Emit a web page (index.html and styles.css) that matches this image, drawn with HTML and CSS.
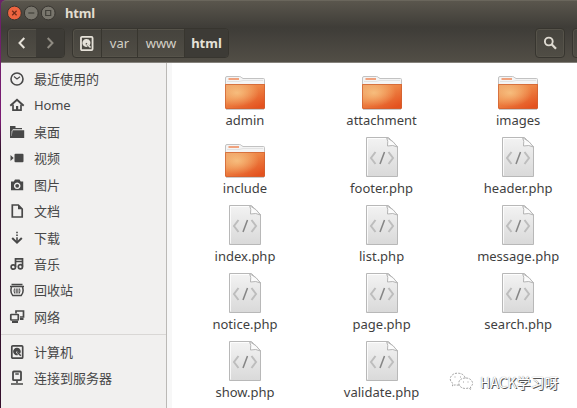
FILE: index.html
```html
<!DOCTYPE html>
<html lang="zh-CN">
<head>
<meta charset="utf-8">
<title>html</title>
<link rel="stylesheet" href="styles.css">
</head>
<body>
<svg class="defs" width="0" height="0">
  <defs>
    <linearGradient id="g-folder" x1="0" y1="0" x2="0.75" y2="1"><stop offset="0" stop-color="#eda066"/><stop offset=".45" stop-color="#ee8747"/><stop offset="1" stop-color="#e4521f"/></linearGradient>
    <radialGradient id="g-shine" cx=".3" cy=".35" r=".55"><stop offset="0" stop-color="#f9cd8d" stop-opacity=".75"/><stop offset="1" stop-color="#f9cd8d" stop-opacity="0"/></radialGradient>
    <linearGradient id="g-page" x1="0" y1="0" x2="0" y2="1"><stop offset="0" stop-color="#f3f3f3"/><stop offset="1" stop-color="#d9d9d9"/></linearGradient>
    <linearGradient id="g-fold" x1="0" y1="1" x2="1" y2="0"><stop offset="0" stop-color="#fff"/><stop offset=".5" stop-color="#fafafa"/><stop offset="1" stop-color="#bbb"/></linearGradient>
  </defs>
  <symbol id="folder" viewBox="0 0 42 36">
    <path d="M1.500 33V3q0-1.500 1.500-1.500H15.500q1 0 1.700.8L19 3.500H39.500q1 0 1 1V33z" fill="#f4f4f4" stroke="#c2c2c2"/>
    <path d="M4.500 4H15" stroke="#ef8f62" stroke-width="1.600"/>
    <path d="M3 6.500H15L19 5.500H39" stroke="#e2e2e2" fill="none"/>
    <path d="M1 9H41V32.500q0 1.500-1.500 1.500H2.500Q1 34 1 32.500z" fill="url(#g-folder)"/>
    <path d="M1 9H41V32.500q0 1.500-1.500 1.500H2.500Q1 34 1 32.500z" fill="url(#g-shine)"/>
    <path d="M1.500 9.500H40.500V32q0 1.500-1.500 1.500H3Q1.500 33.500 1.500 32z" fill="none" stroke="#cf6232" stroke-opacity=".75"/>
    <path d="M2 34.500H40" stroke="#aaa" stroke-opacity=".6"/>
  </symbol>
  <symbol id="php" viewBox="0 0 34 42">
    <path d="M1.500 1.500H23.500L32.500 10.500V40.500H1.500z" fill="url(#g-page)" stroke="#b8b8b8"/>
    <path d="M2.500 39.500V2.500H22" fill="none" stroke="#fff" stroke-opacity=".8"/>
    <path d="M21.500 1.500Q23.500 5 22.500 10Q28 8.500 32.500 11Q29 5 21.500 1.500z" fill="url(#g-fold)" stroke="#b5b5b5"/>
    <path d="M10.500 16L6 22L10.500 28M23.500 16L28 22L23.500 28" fill="none" stroke="#bdbdbd" stroke-width="2"/>
    <path d="M19.500 16L15 28" stroke="#858585" stroke-width="1.500"/>
  </symbol>
  <symbol id="disk" viewBox="0 0 16 16">
    <rect x="2.800" y="1.800" width="10.900" height="12.400" rx="1" fill="none" stroke="currentColor" stroke-width="1.700"/>
    <path d="M8.200 3.800a3.700 3.700 0 1 0 1 7.100L7 8.500l.8-1.300L11 9.800a3.700 3.700 0 0 0-2.800-6z" fill="currentColor"/>
    <path d="M8.300 8.300l3.500 3.500" stroke="currentColor" stroke-width="1.500"/>
  </symbol>
  <symbol id="clock" viewBox="0 0 16 16"><circle cx="8" cy="8" r="6" fill="none" stroke="currentColor" stroke-width="1.600"/><path d="M5 5.500L8 8l3-2.200" fill="none" stroke="currentColor" stroke-width="1.100"/></symbol>
  <symbol id="home" viewBox="0 0 16 16"><path d="M1.300 8.800L8 2.800l6.700 6" fill="none" stroke="currentColor" stroke-width="1.900"/><path d="M4 7.500V13.200H12V7.500" fill="none" stroke="currentColor" stroke-width="1.700"/><path d="M7 9h2.200v4H7z" fill="currentColor"/></symbol>
  <symbol id="desk" viewBox="0 0 16 16"><path d="M1 2h5.500v2H13v1.300H4L2.600 7V14H1z" fill="currentColor"/><path d="M3.500 6.300H15.200V14H1V12L2.800 12z" fill="currentColor"/></symbol>
  <symbol id="video" viewBox="0 0 16 16"><rect x="5.500" y="3.800" width="9" height="8.500" rx="1" fill="currentColor"/><path d="M1.500 5L4.700 8L1.500 11z" fill="currentColor"/></symbol>
  <symbol id="camera" viewBox="0 0 16 16"><path fill-rule="evenodd" d="M2 4.500h2.800L6 2.500h4.500l1.200 2H14.200V13.300H2zM8.200 5.500a3.300 3.300 0 1 0 .01 0z" fill="currentColor"/><circle cx="8.200" cy="8.800" r="1.900" fill="currentColor"/></symbol>
  <symbol id="doc" viewBox="0 0 16 16"><path d="M3.300 2H9.300L13.200 6V14H3.300z" fill="none" stroke="currentColor" stroke-width="1.700"/><path d="M9 2v4.200h4z" fill="currentColor"/></symbol>
  <symbol id="down" viewBox="0 0 16 16"><path d="M8 1.800v1.400M8 4.500v1.400M8 7.200V13" stroke="currentColor" stroke-width="1.600"/><path d="M3.200 8L8 12.700L12.800 8" fill="none" stroke="currentColor" stroke-width="2"/></symbol>
  <symbol id="music" viewBox="0 0 16 16"><path d="M6.500 11V2.800H13.500V10.500M6.500 5.500H13.500" fill="none" stroke="currentColor" stroke-width="1.700"/><circle cx="4.300" cy="11" r="2.200" fill="none" stroke="currentColor" stroke-width="1.700"/><circle cx="11.400" cy="10.700" r="2.100" fill="none" stroke="currentColor" stroke-width="1.700"/></symbol>
  <symbol id="trash" viewBox="0 0 16 16"><path d="M2.500 2.500H13.500M1 4.500H15" stroke="currentColor" stroke-width="1.500"/><path d="M2.500 5Q.8 10 3.800 13.500H12.200Q15.200 10 13.500 5" fill="none" stroke="currentColor" stroke-width="1.500"/><path d="M5.500 6.500q-1 2.500.2 5M10.500 6.500q1 2.500-.2 5M7.200 6.500v5M8.900 6.500v5" fill="none" stroke="currentColor"/></symbol>
  <symbol id="net" viewBox="0 0 16 16"><path d="M7 4.500V2H14.500V8H11" fill="none" stroke="currentColor" stroke-width="1.700"/><rect x="1.800" y="5.500" width="7.500" height="5.500" rx=".5" fill="#f1f0ef" stroke="currentColor" stroke-width="1.700"/><path d="M3 13H9M11 10h3.500" stroke="currentColor" stroke-width="2"/></symbol>
  <symbol id="server" viewBox="0 0 16 16"><rect x="4" y="1.500" width="8" height="8.700" rx=".8" fill="none" stroke="currentColor" stroke-width="1.800"/><path d="M6.300 4h3.500M8 10v3M2 14H14" stroke="currentColor" stroke-width="1.600"/></symbol>
</svg>
<div class="desktop">
  <div class="window">
    <header class="header">
      <div class="titlebar">
        <svg class="controls" width="50" height="16" viewBox="0 0 50 16">
          <circle cx="7.400" cy="8" r="6.900" fill="#ed6440" stroke="#383530"/><path d="M5.200 5.800l4.400 4.400m0-4.400l-4.400 4.400" stroke="#722c19" stroke-width="1.300"/>
          <circle cx="24.300" cy="8" r="6.900" fill="#79766d" stroke="#383530"/><path d="M21.300 8h6" stroke="#42403a" stroke-width="1.200"/>
          <circle cx="41.200" cy="8" r="6.900" fill="#79766d" stroke="#383530"/><path d="M38.700 5.500h5v5h-5z" fill="none" stroke="#42403a" stroke-width="1.200"/>
        </svg>
        <h1 class="title">html</h1>
      </div>
      <div class="toolbar">
        <div class="group nav">
          <span class="btn"><svg width="12" height="14" viewBox="0 0 12 14"><path d="M8.300 2L3.500 7l4.800 5" fill="none" stroke="#e6e2d9" stroke-width="2"/></svg></span>
          <span class="btn off"><svg width="12" height="14" viewBox="0 0 12 14"><path d="M3.700 2L8.500 7l-4.800 5" fill="none" stroke="#8f8b82" stroke-width="2"/></svg></span>
        </div>
        <div class="group path">
          <span class="btn root"><svg width="17" height="17"><use href="#disk"/></svg></span>
          <span class="btn var">var</span>
          <span class="btn www">www</span>
          <span class="btn current">html</span>
        </div>
        <div class="group search"><span class="btn"><svg width="16" height="16" viewBox="0 0 16 16"><circle cx="6.800" cy="6.500" r="3.900" fill="none" stroke="#dedad1" stroke-width="1.900"/><path d="M9.600 9.300L14 13.700" stroke="#dedad1" stroke-width="2.300"/></svg></span></div>
        <div class="group more"></div>
      </div>
    </header>
    <div class="body">
      <nav class="sidebar">
        <ul class="places">
          <li><svg><use href="#clock"/></svg>最近使用的</li>
          <li class="latin"><svg><use href="#home"/></svg>Home</li>
          <li><svg><use href="#desk"/></svg>桌面</li>
          <li><svg><use href="#video"/></svg>视频</li>
          <li><svg><use href="#camera"/></svg>图片</li>
          <li><svg><use href="#doc"/></svg>文档</li>
          <li><svg><use href="#down"/></svg>下载</li>
          <li><svg><use href="#music"/></svg>音乐</li>
          <li><svg><use href="#trash"/></svg>回收站</li>
          <li><svg><use href="#net"/></svg>网络</li>
        </ul>
        <ul class="places devices">
          <li><svg><use href="#disk"/></svg>计算机</li>
          <li><svg><use href="#server"/></svg>连接到服务器</li>
        </ul>
      </nav>
      <main class="files">
        <div class="file"><svg class="dir"><use href="#folder"/></svg><span>admin</span></div>
        <div class="file"><svg class="dir"><use href="#folder"/></svg><span>attachment</span></div>
        <div class="file"><svg class="dir"><use href="#folder"/></svg><span>images</span></div>
        <div class="file"><svg class="dir"><use href="#folder"/></svg><span>include</span></div>
        <div class="file"><svg class="page"><use href="#php"/></svg><span>footer.php</span></div>
        <div class="file"><svg class="page"><use href="#php"/></svg><span>header.php</span></div>
        <div class="file"><svg class="page"><use href="#php"/></svg><span>index.php</span></div>
        <div class="file"><svg class="page"><use href="#php"/></svg><span>list.php</span></div>
        <div class="file"><svg class="page"><use href="#php"/></svg><span>message.php</span></div>
        <div class="file"><svg class="page"><use href="#php"/></svg><span>notice.php</span></div>
        <div class="file"><svg class="page"><use href="#php"/></svg><span>page.php</span></div>
        <div class="file"><svg class="page"><use href="#php"/></svg><span>search.php</span></div>
        <div class="file"><svg class="page"><use href="#php"/></svg><span>show.php</span></div>
        <div class="file"><svg class="page"><use href="#php"/></svg><span>validate.php</span></div>
      </main>
    </div>
  </div>
  <div class="watermark">
    <svg width="26" height="20" viewBox="0 0 26 20" fill="none" stroke="#888" stroke-width=".8" stroke-dasharray="2 1.200">
      <path d="M10 13Q7.500 13.300 6 12.800L3.500 14L4 11.500Q.5 9 1.500 5.500Q3.500 1 9 1.200Q14.500 1.500 16 5.500"/>
      <path d="M16.500 6Q10 6.500 9.800 11Q10.500 16.500 17 16.500L19.500 16L22 17.500L21.500 15Q24 13 23.500 10.500Q22 6 16.500 6z"/>
      <path d="M6 4.500v1M11.500 4.500v1M14.500 9.500v1M19 9.500v1" stroke-dasharray="none"/>
    </svg>
    <span>HACK学习呀</span>
  </div>
</div>
</body>
</html>
```
FILE: styles.css
```css
* { box-sizing: border-box; }
body {
  margin: 0;
  font: 13px/16px "Noto Sans", "Noto Sans CJK SC", sans-serif;
  color: #3f3f3f;
}
.defs { position: absolute; }
.desktop {
  position: relative;
  width: 577px;
  height: 408px;
  padding-left: 1px;
  overflow: hidden;
  background: linear-gradient(#6b2468 0, #7a1a72 120px, #33142c 150px, #35102d 100%);
}
.window { height: 408px; display: flex; flex-direction: column; }
.header {
  height: 63px;
  flex: none;
  border-top: 1px solid #6a665c;
  border-bottom: 1px solid #85827c;
  border-top-left-radius: 5px;
  background: linear-gradient(#5a564d 0, #3f3d38 26px, #403e39 30px, #524e46 100%);
}
.titlebar { height: 24px; display: flex; align-items: center; padding-left: 6px; }
.title { margin: 0 0 0 8px; font-size: 13px; line-height: 16px; font-weight: 700; color: #e2ddd1; letter-spacing: -.15px; }
.toolbar { display: flex; padding: 3px 0 0 6px; height: 36px; }
.group {
  display: flex;
  flex: none;
  height: 30px;
  border: 1px solid #37352f;
  border-radius: 4px;
  box-shadow: inset 0 0 0 1px #56534a;
  background: linear-gradient(#45433d, #504d45);
}
.btn { display: flex; align-items: center; justify-content: center; flex: 1; color: #d4d0c6; }
.nav { width: 58px; }
.off, .current { background: #3d3b36; border-radius: 0 3px 3px 0; }
.path { width: 157px; margin-left: 7px; font-size: 13px; }
.path .btn + .btn { border-left: 1px solid #38362f; }
.path .root { flex: 0 0 28px; padding-right: 2px; color: #e6e2d9; }
.path .var { flex: 0 0 36px; }
.path .www { flex: 0 0 47px; }
.path .current { font-weight: 700; color: #e6e2d9; }
.search { width: 30px; margin-left: 306px; padding-right: 1px; }
.more { width: 30px; margin-left: 7px; }
.body { display: flex; flex: 1; min-height: 0; }
.sidebar { width: 166px; flex: none; background: #f1f0ef; border-right: 1px solid #bbb9b6; padding-top: 3px; }
.places { list-style: none; margin: 0; padding: 0; }
.places li { display: flex; align-items: center; height: 26.4px; padding-left: 8px; gap: 9px; color: #474747; }
.places svg { width: 16px; height: 16px; color: #484848; }
.places .latin { letter-spacing: -.1px; padding-bottom: 1px; }
.devices { border-top: 1px solid #d9d7d5; margin-top: 4px; padding-top: 4px; }
.files {
  flex: 1;
  display: grid;
  grid-template-columns: repeat(3, 136.600px);
  grid-auto-rows: 68px;
  padding: 4px 0 0 4.700px;
  background: #fff;
  border-left: 5px solid #f7f7f7;
}
.file { display: flex; flex-direction: column; align-items: center; justify-content: flex-end; padding-bottom: 7px; }
.file span { height: 16px; }
.dir { width: 42px; height: 36px; margin-bottom: 1px; }
.page { width: 34px; height: 42px; margin-bottom: 2px; }
.watermark { position: absolute; left: 449px; top: 372px; display: flex; align-items: center; gap: 5px; }
.watermark span {
  font: 14px/20px "Noto Sans CJK SC", sans-serif;
  color: #fff;
  text-shadow: 1px 1px 0 #555, 0 0 1px #777;
}
```
